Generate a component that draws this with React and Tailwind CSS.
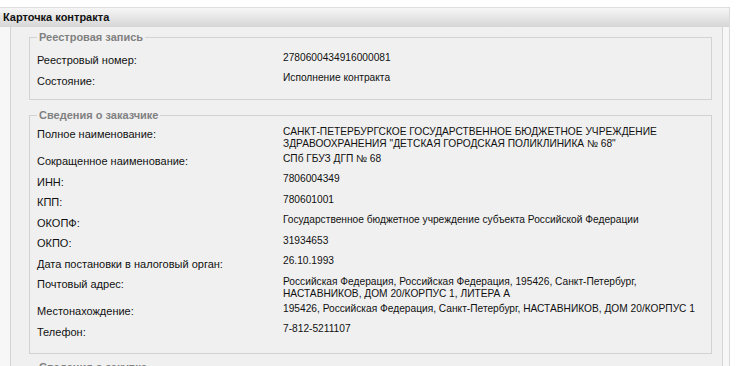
const registry = [
  { label: 'Реестровый номер:', value: '2780600434916000081' },
  { label: 'Состояние:', value: 'Исполнение контракта' },
]

const customer = [
  {
    label: 'Полное наименование:',
    value: [
      'САНКТ-ПЕТЕРБУРГСКОЕ ГОСУДАРСТВЕННОЕ БЮДЖЕТНОЕ УЧРЕЖДЕНИЕ',
      'ЗДРАВООХРАНЕНИЯ "ДЕТСКАЯ ГОРОДСКАЯ ПОЛИКЛИНИКА № 68"',
    ],
  },
  { label: 'Сокращенное наименование:', value: ['СПб ГБУЗ ДГП № 68'] },
  { label: 'ИНН:', value: ['7806004349'] },
  { label: 'КПП:', value: ['780601001'] },
  { label: 'ОКОПФ:', value: ['Государственное бюджетное учреждение субъекта Российской Федерации'] },
  { label: 'ОКПО:', value: ['31934653'] },
  { label: 'Дата постановки в налоговый орган:', value: ['26.10.1993'] },
  {
    label: 'Почтовый адрес:',
    value: [
      'Российская Федерация, Российская Федерация, 195426, Санкт-Петербург,',
      'НАСТАВНИКОВ, ДОМ 20/КОРПУС 1, ЛИТЕРА А',
    ],
  },
  {
    label: 'Местонахождение:',
    value: ['195426, Российская Федерация, Санкт-Петербург, НАСТАВНИКОВ, ДОМ 20/КОРПУС 1'],
  },
  { label: 'Телефон:', value: ['7-812-5211107'] },
]

function Section({ title, rows, className = '' }) {
  return (
    <fieldset
      className={`mr-[10px] ml-[18px] border border-[#d2d2d2] pr-[7px] pl-[7px] ${className}`}
    >
      <legend className="ml-0 px-[2px] text-[11px] leading-[13px] font-bold text-[#808080]">
        {title}
      </legend>
      <div className="grid grid-cols-[246px_1fr] items-start">
        {rows.map((r) => (
          <Row key={r.label} {...r} />
        ))}
      </div>
    </fieldset>
  )
}

function Row({ label, value }) {
  const lines = Array.isArray(value) ? value : [value]
  return (
    <>
      <div className="pt-[4px] pb-[3.5px] text-[11px] leading-[13px] text-[#111]">{label}</div>
      <div className="py-[1.5px] text-[10.2px] leading-[12px] text-[#111]">
        {lines.map((l) => (
          <div key={l}>{l}</div>
        ))}
      </div>
    </>
  )
}

export default function App() {
  return (
    <div className="h-[366px] overflow-hidden bg-white pt-[7px] font-['Liberation_Sans',Arial,sans-serif]">
      <div className="w-[730px] border-r border-[#dadada]">
        <div className="flex h-[20px] items-center border-t border-[#dedede] bg-gradient-to-b from-[#f6f6f6] to-[#d6d6d6] pl-[3px]">
          <span className="text-[11px] font-bold text-[#111]">Карточка контракта</span>
        </div>
        <div className="bg-[#f7f7f7] pl-[10px] pr-[6px]">
          <div className="border-r border-l border-[#d4d4d4] bg-[#f0f0f0] pt-[4px] pb-[20px]">
            <Section title="Реестровая запись" rows={registry} className="pt-[6px] pb-[8px]" />
            <Section title="Сведения о заказчике" rows={customer} className="mt-[9px] pt-[2px] pb-[11px]" />
            <Section title="Сведения о закупке" rows={[]} className="mt-[7px] pb-[40px]" />
          </div>
        </div>
      </div>
    </div>
  )
}
